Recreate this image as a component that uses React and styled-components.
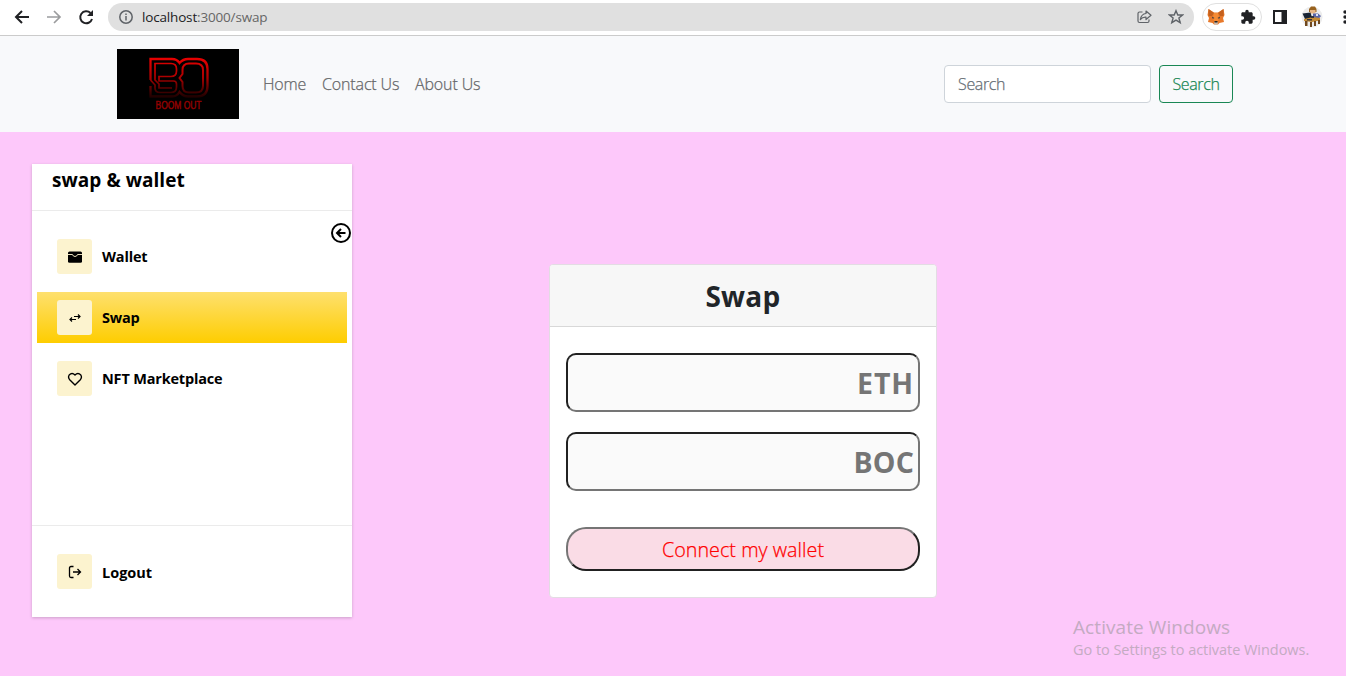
import React from "react";
import styled, { createGlobalStyle } from "styled-components";

const GlobalStyle = createGlobalStyle`
  *, *::before, *::after { box-sizing: border-box; }
  body { margin: 0; overflow: hidden; background: #fdc8fa; color: #212529; font-family: "Open Sans", "Noto Sans", sans-serif; }
  button, input { font-family: inherit; margin: 0; }
`;

const Page = styled.div`
  display: flex;
  flex-direction: column;
  height: 676px;
  overflow: hidden;
`;

/* Browser toolbar */
const BrowserBar = styled.header`
  display: flex;
  align-items: flex-start;
  height: 36px;
  padding: 3px 0 0 14px;
  background: #fff;
  border-bottom: 1px solid #cbcbcb;
`;
const NavIcon = styled.div`
  display: flex;
  align-items: center;
  width: 32px;
  height: 28px;
  flex: none;
`;
const AddressBar = styled.div`
  display: flex;
  align-items: center;
  width: 1086px;
  height: 28px;
  margin-left: -2px;
  padding: 0 10px;
  border-radius: 14px;
  background: #e0e0e0;
  flex: none;
`;
const Url = styled.span`
  flex: 1;
  margin-left: 8px;
  font-size: 13.5px;
  line-height: 28px;
  letter-spacing: -0.17px;
  color: #666;
  b { font-weight: 400; color: #202124; }
`;
const AddressIcons = styled.div`
  display: flex;
  gap: 16px;
`;
const Extensions = styled.div`
  display: flex;
  align-items: center;
  justify-content: space-between;
  width: 60px;
  height: 28px;
  margin-left: 8px;
  padding: 0 5px 0 4px;
  border: 1px solid #e0e0e0;
  border-radius: 14px;
  flex: none;
`;
const BrowserTools = styled.div`
  display: flex;
  align-items: center;
  height: 28px;
  margin-left: 11px;
  gap: 14px;
  flex: none;
`;

/* Site navigation */
const Navbar = styled.nav`
  display: flex;
  align-items: center;
  justify-content: space-between;
  height: 96px;
  padding: 0 113px 0 117px;
  background: #f8f9fb;
  flex: none;
`;
const NavLeft = styled.div`
  display: flex;
  align-items: center;
  gap: 24px;
`;
const Logo = styled.svg`
  display: block;
  width: 122px;
  height: 70px;
  background: #000;
`;
const NavLinks = styled.div`
  display: flex;
  gap: 16px;
`;
const NavLink = styled.a`
  width: ${(p) => p.$w}px;
  font-size: 16px;
  font-weight: 300;
  line-height: 24px;
  white-space: nowrap;
  letter-spacing: -0.14px;
  color: #666769;
  -webkit-text-stroke: 0.25px;
`;
const SearchForm = styled.div`
  display: flex;
  gap: 8px;
`;
const SearchInput = styled.input`
  width: 207px;
  height: 38px;
  padding: 0 12px 0 13px;
  border: 1px solid #ced4da;
  border-radius: 4px;
  background: #fff;
  font-size: 16px;
  font-weight: 300;
  letter-spacing: -0.35px;
  -webkit-text-stroke: 0.25px;
  &::placeholder { color: #666e75; opacity: 1; }
`;
const SearchButton = styled.button`
  width: 74px;
  height: 38px;
  padding: 0;
  border: 1px solid #198754;
  border-radius: 4px;
  background: transparent;
  color: #198754;
  font-size: 16px;
  font-weight: 300;
  letter-spacing: -0.35px;
  -webkit-text-stroke: 0.25px;
`;

/* Main area */
const Main = styled.main`
  display: flex;
  align-items: flex-start;
  flex: 1;
  padding: 32px;
`;
const Sidebar = styled.aside`
  display: flex;
  flex-direction: column;
  width: 320px;
  height: 453px;
  background: #fff;
  box-shadow: 0 1px 3px rgba(0, 0, 0, 0.2);
  flex: none;
`;
const SidebarTitle = styled.h2`
  height: 47px;
  margin: 0;
  padding: 0 20px;
  border-bottom: 1px solid #ebebeb;
  color: #000;
  font-size: 19px;
  font-weight: 700;
  line-height: 32px;
  letter-spacing: 0.05px;
`;
const Menu = styled.div`
  position: relative;
  display: flex;
  flex-direction: column;
  gap: 10px;
  flex: 1;
  padding: 20px 5px;
`;
const Collapse = styled.div`
  position: absolute;
  top: 11px;
  right: 0;
  width: 22px;
  height: 22px;
`;
const SidebarFooter = styled.div`
  height: 92px;
  padding: 20px 5px;
  border-top: 1px solid #ebebeb;
`;
const MenuItem = styled.div`
  display: flex;
  align-items: center;
  gap: 10px;
  height: 51px;
  padding: 0 20px;
  background: ${(p) => (p.$active ? "linear-gradient(#fee06e, #fecd00)" : "none")};
  color: #000;
  font-size: 14.5px;
  font-weight: 700;
  letter-spacing: ${(p) => p.$spacing || "-0.18px"};
`;
const IconBox = styled.span`
  display: flex;
  align-items: center;
  justify-content: center;
  width: 35px;
  height: 35px;
  border-radius: 3px;
  background: #fcf3cf;
`;
const MenuLabel = styled.span`
  padding-top: ${(p) => (p.$low ? 2 : 0)}px;
`;

/* Swap card */
const Card = styled.section`
  width: 388px;
  height: 334px;
  margin: 100px 0 0 197px;
  border: 1px solid #e3dce3;
  border-radius: 4px;
  background: #fff;
  overflow: hidden;
  flex: none;
`;
const CardHeader = styled.h1`
  height: 62px;
  margin: 0;
  border-bottom: 1px solid #d8d8d8;
  background: #f7f7f7;
  text-align: center;
  font-size: 28px;
  font-weight: 700;
  line-height: 63px;
  letter-spacing: 0.3px;
`;
const CardBody = styled.div`
  display: flex;
  flex-direction: column;
  padding: 26px 16px;
`;
const AmountInput = styled.input`
  width: 354px;
  height: 59px;
  margin-bottom: 20px;
  padding: 2px 4px 2px 5px;
  border: 2px solid;
  border-color: #212121 #757575 #757575 #212121;
  border-radius: 10px;
  background: #fafafa;
  text-align: right;
  font-size: 28.5px;
  font-weight: 700;
  letter-spacing: ${(p) => p.$spacing || "0.2px"};
  &::placeholder { color: #757575; opacity: 1; }
`;
const ConnectButton = styled.button`
  width: 354px;
  height: 44px;
  margin-top: 16px;
  padding: 1px 0 0;
  border: 2px solid;
  border-color: #757575 #212121 #212121 #757575;
  border-radius: 20px;
  background: #fadce6;
  color: #f00;
  font-size: 19.7px;
  font-weight: 300;
  letter-spacing: 0.05px;
  -webkit-text-stroke: 0.25px;
`;

const Watermark = styled.div`
  position: absolute;
  left: 1073px;
  top: 614px;
  color: #c4abc2;
  white-space: nowrap;
`;
const WatermarkTitle = styled.div`
  font-size: 19px;
  line-height: 26px;
  letter-spacing: 0.08px;
`;
const WatermarkText = styled.div`
  font-size: 14.5px;
  line-height: 20px;
  letter-spacing: -0.04px;
`;

const Stroke = ({ size = 16, box = 16, w = 1.5, color = "#000", children }) => (
  <svg width={size} height={size} viewBox={`0 0 ${box} ${box}`} fill="none" stroke={color} strokeWidth={w}>
    {children}
  </svg>
);

const BrandLogo = () => (
  <Logo viewBox="0 0 122 70" fill="none">
    <defs>
      <linearGradient id="fade" gradientUnits="userSpaceOnUse" x1="0" y1="9" x2="0" y2="49">
        <stop offset="0" stopColor="#e80000" />
        <stop offset="0.5" stopColor="#a80000" />
        <stop offset="0.85" stopColor="#400000" />
        <stop offset="1" stopColor="#180000" />
      </linearGradient>
    </defs>
    <g stroke="url(#fade)" strokeWidth="2.3">
      <path d="M33.500 31V10H55Q60 10 62.500 14Q66 10 71 10H80Q90.500 10 90.500 20V37Q90.500 47.500 80 47.500H71Q66 47.500 62.500 43Q60 47.500 55 47.500H33.500V37" />
      <path d="M33.500 31L38 36V39Q38 43.500 43 43.500H54Q59.500 43.500 59.500 38V35Q59.500 32 56.500 32H42V27.500H54Q59.500 27.500 59.500 22V20Q59.500 14.500 54 14.500H38V31L42 35V39H55" strokeWidth="1.700" />
      <path d="M65.500 33L62.500 29L65.500 25V21Q65.500 14.500 72 14.500H79Q86 14.500 86 21V37Q86 43.500 79 43.500H72Q65.500 43.500 65.500 37Z" strokeWidth="2" />
    </g>
    <text x="38.500" y="59.500" textLength="46" lengthAdjust="spacingAndGlyphs" fill="#900000" fontFamily="Liberation Sans, sans-serif" fontSize="10.800" stroke="#900000" strokeWidth="0.500">BOOM OUT</text>
  </Logo>
);

const Fox = () => (
  <svg width="18" height="16" viewBox="0 0 18 16">
    <path d="M1.500 0L7 3.500H11L16.500 0L17.500 6L16 9L17 13L12.500 14L11 15.500H7L5.500 14L1 13L2 9L0.500 6Z" fill="#e8792a" />
    <path d="M1.500 0L7 4L5 7L1.500 7ZM16.500 0L11 4L13 7L16.500 7Z" fill="#c4601d" />
    <path d="M7 4H11L12 9L10.500 13H7.500L6 9Z" fill="#f58b34" />
    <path d="M4.800 7.500L7.500 9L5.800 9.700ZM13.200 7.500L10.500 9L12.200 9.700Z" fill="#273546" />
    <path d="M7 13H11L10.500 15.500H7.500Z" fill="#c9bbb0" />
    <path d="M7.500 12H10.500V13.500H7.500Z" fill="#222" />
  </svg>
);

const Avatar = () => (
  <svg width="22" height="22" viewBox="0 0 22 22">
    <circle cx="11" cy="11" r="10.500" fill="#ececec" />
    <path d="M8 3L10 0.500H14L15.500 3V6H8Z" fill="#98621e" />
    <path d="M9 4H14.500V7.500H9Z" fill="#e9b786" />
    <path d="M12 7.500H17L20 10L18 12.500H12Z" fill="#5965a8" />
    <path d="M15 8H17V10H15Z" fill="#dfe3f0" />
    <path d="M1.500 7.500L9.500 6.500L11.500 13H4Z" fill="#172334" />
    <path d="M3 13L12 11L19 12V14.500L11 16L3 15Z" fill="#c48a35" />
    <path d="M4 15H6.500V20H4ZM9 16H11V21H9ZM13 15H15V20H13ZM17 14H19V18H17Z" fill="#70481e" />
    <path d="M10 10H13V12H10ZM6 13H11V14.500H6Z" fill="#34343c" />
  </svg>
);

export default function App() {
  return (
    <Page>
      <GlobalStyle />
      <BrowserBar>
        <NavIcon><Stroke w={2} color="#202124"><path d="M15 8H2M8 2L2 8L8 14" /></Stroke></NavIcon>
        <NavIcon><Stroke w={1.7} color="#9b9c9e"><path d="M1 8H14M8 2L14 8L8 14" /></Stroke></NavIcon>
        <NavIcon>
          <Stroke w={2} color="#202124">
            <path d="M12.500 4A6 6 0 1 0 14 10" />
            <path d="M15 1V7H9Z" fill="#202124" stroke="none" />
          </Stroke>
        </NavIcon>
        <AddressBar>
          <Stroke color="#5f6368" w={1.5}><circle cx="8" cy="8" r="6.200" /><path d="M8 7V11.500M8 4.500V6" /></Stroke>
          <Url><b>localhost</b>:3000/swap</Url>
          <AddressIcons>
            <Stroke color="#5f6368" w={1.2}>
              <path d="M6.500 3H3.500Q2 3 2 4.500V12Q2 13.500 3.500 13.500H11.500Q13 13.500 13 12V10.500" />
              <path d="M10 2L15 6.300L10 10.500V8.200Q6.500 7.900 4.300 10.500Q5.300 5 10 4.500Z" strokeLinejoin="round" />
            </Stroke>
            <Stroke color="#5f6368" w={1.4}>
              <path d="M8 1.700L9.800 6H14.500L10.900 9L12.200 13.700L8 11.100L3.800 13.700L5.100 9L1.500 6H6.200Z" />
            </Stroke>
          </AddressIcons>
        </AddressBar>
        <Extensions>
          <Fox />
          <svg width="16" height="16" viewBox="0 0 24 24" fill="#202124">
            <path d="M20.500 11H19V7c0-1.100-.9-2-2-2h-4V3.500a2.500 2.500 0 0 0-5 0V5H4c-1.100 0-2 .9-2 2v3.800h1.500a2.700 2.700 0 0 1 0 5.400H2V20c0 1.100.9 2 2 2h3.800v-1.500a2.700 2.700 0 0 1 5.400 0V22H17c1.100 0 2-.9 2-2v-4h1.500a2.500 2.500 0 0 0 0-5z" />
          </svg>
        </Extensions>
        <BrowserTools>
          <svg width="14" height="14" viewBox="0 0 14 14"><path d="M0 0H14V14H0ZM2 2V12H8.500V2Z" fill="#202124" fillRule="evenodd" /></svg>
          <Avatar />
          <svg width="12" height="16" viewBox="0 0 12 16" fill="#202124"><circle cx="8" cy="3" r="1.700" /><circle cx="8" cy="8" r="1.700" /><circle cx="8" cy="13" r="1.700" /></svg>
        </BrowserTools>
      </BrowserBar>

      <Navbar>
        <NavLeft>
          <BrandLogo />
          <NavLinks>
            <NavLink $w={43}>Home</NavLink>
            <NavLink $w={77}>Contact Us</NavLink>
            <NavLink $w={67}>About Us</NavLink>
          </NavLinks>
        </NavLeft>
        <SearchForm>
          <SearchInput placeholder="Search" />
          <SearchButton>Search</SearchButton>
        </SearchForm>
      </Navbar>

      <Main>
        <Sidebar>
          <SidebarTitle>swap &amp; wallet</SidebarTitle>
          <Menu>
            <Collapse>
              <Stroke size={22} box={22} w={2}>
                <circle cx="11" cy="11" r="9" /><path d="M15.500 11H8M11 7L7 11L11 15" />
              </Stroke>
            </Collapse>
            <MenuItem>
              <IconBox>
                <svg width="16" height="16" viewBox="0 0 16 16">
                  <path d="M2.500 2.500H13.500Q15 2.500 15 4V12.500Q15 13.800 13.500 13.800H2.500Q1 13.800 1 12.500V4Q1 2.500 2.500 2.500Z" />
                  <path d="M1 5.500H5.500Q6 7.500 8 7.500Q10 7.500 10.500 5.500H15" fill="none" stroke="#e6ddba" strokeWidth="1" />
                </svg>
              </IconBox>
              <MenuLabel>Wallet</MenuLabel>
            </MenuItem>
            <MenuItem $active>
              <IconBox>
                <Stroke w={1.2}><path d="M7 6.500H13M11 4.500L13 6.500L11 8.500M9 9.500H3M5 7.500L3 9.500L5 11.500" /></Stroke>
              </IconBox>
              <MenuLabel>Swap</MenuLabel>
            </MenuItem>
            <MenuItem>
              <IconBox>
                <Stroke w={1.4}><path d="M8 14L2.700 8.800Q0.700 6.500 2.200 4Q5 1 8 4Q11 1 13.800 4Q15.300 6.500 13.300 8.800Z" strokeLinejoin="round" /></Stroke>
              </IconBox>
              <MenuLabel>NFT Marketplace</MenuLabel>
            </MenuItem>
          </Menu>
          <SidebarFooter>
            <MenuItem $spacing="0">
              <IconBox>
                <Stroke w={1.3}><path d="M6.500 2.500H4Q2.500 2.500 2.500 4V12Q2.500 13.500 4 13.500H6.500M6 8H13.500M10.500 5L13.500 8L10.500 11" /></Stroke>
              </IconBox>
              <MenuLabel $low>Logout</MenuLabel>
            </MenuItem>
          </SidebarFooter>
        </Sidebar>

        <Card>
          <CardHeader>Swap</CardHeader>
          <CardBody>
            <AmountInput placeholder="ETH" $spacing="0.9px" />
            <AmountInput placeholder="BOC" />
            <ConnectButton>Connect my wallet</ConnectButton>
          </CardBody>
        </Card>
      </Main>

      <Watermark>
        <WatermarkTitle>Activate Windows</WatermarkTitle>
        <WatermarkText>Go to Settings to activate Windows.</WatermarkText>
      </Watermark>
    </Page>
  );
}
